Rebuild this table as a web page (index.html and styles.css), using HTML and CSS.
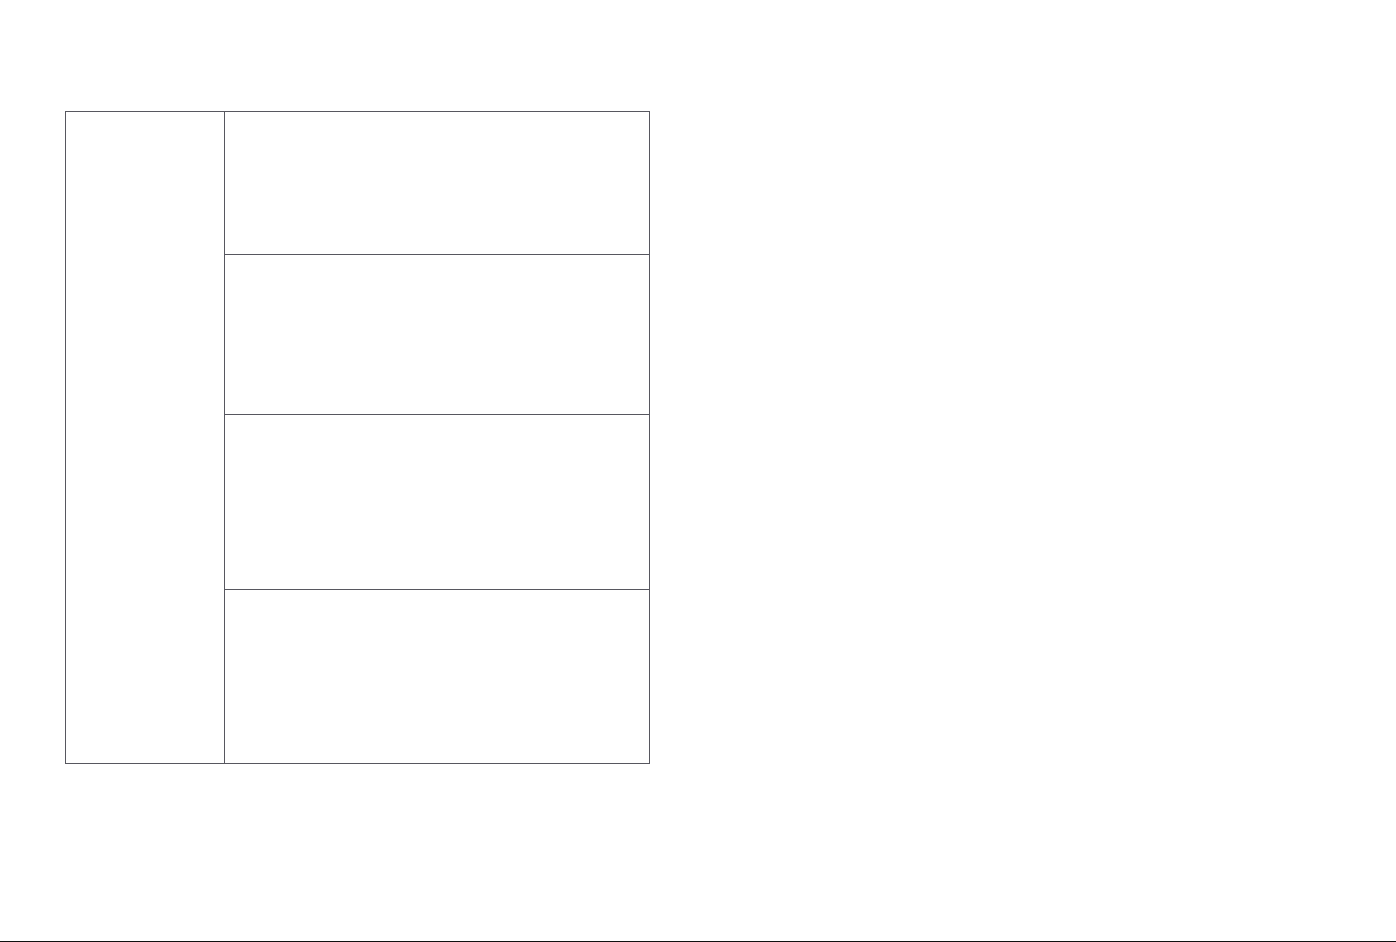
FILE: index.html
```html
<!DOCTYPE html>
<html lang="en">
<head>
<meta charset="utf-8">
<title>Layout</title>
<link rel="stylesheet" href="styles.css">
</head>
<body>
<div class="page">
  <main class="content">
    <div class="grid">
      <div class="side"></div>
      <div class="rows">
        <div class="row row-1"></div>
        <div class="row row-2"></div>
        <div class="row row-3"></div>
        <div class="row row-4"></div>
      </div>
    </div>
  </main>
  <div class="rule"></div>
</div>
</body>
</html>
```
FILE: styles.css
```css
html, body {
  margin: 0;
  padding: 0;
  background: #ffffff;
  font-family: "Liberation Sans", Arial, sans-serif;
}
.page {
  height: 942px;
  display: flex;
  flex-direction: column;
}
.content {
  padding: 111px 0 0 65px;
}
.grid {
  width: 583px;
  border: 1px solid #57575f;
  display: flex;
}
.side {
  width: 158px;
  border-right: 1px solid #57575f;
}
.rows {
  flex: 1;
  display: flex;
  flex-direction: column;
}
.row + .row {
  border-top: 1px solid #57575f;
}
.row-1 { height: 142px; }
.row-2 { height: 159px; }
.row-3 { height: 174px; }
.row-4 { height: 173px; }
.rule {
  margin-top: auto;
  height: 1px;
  background: #111111;
}
```
